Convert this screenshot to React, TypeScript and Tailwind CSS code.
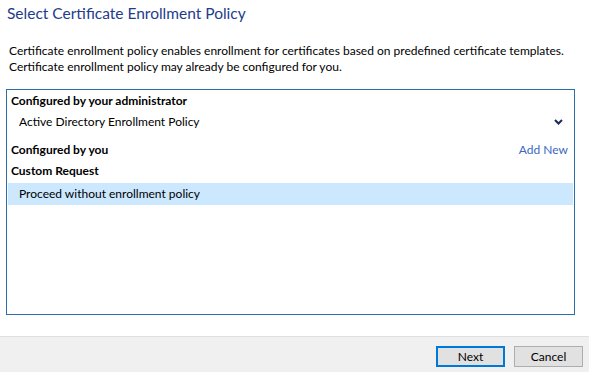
export default function App() {
  return (
    <div className="w-[589px] h-[372px] bg-white flex flex-col font-['Lato',sans-serif] text-[12px] text-black overflow-hidden">
      <div className="flex-1 flex flex-col pl-[7px] pr-[14px]">
        <h1 className="text-[15.5px] leading-[20px] text-[#1e3c8c] mt-[3px] whitespace-nowrap">
          Select Certificate Enrollment Policy
        </h1>
        <p className="mt-[20px] ml-[2px] leading-[16px] whitespace-nowrap">
          Certificate enrollment policy enables enrollment for certificates based on predefined certificate templates.
          <br />
          Certificate enrollment policy may already be configured for you.
        </p>
        <div className="mt-[14px] -ml-[1px] h-[226px] border border-[#2b6ea8] flex flex-col px-[1px]">
          <div className="font-bold pl-[3px] pt-[2px] leading-[17px]">Configured by your administrator</div>
          <div className="flex items-center justify-between h-[23px] pl-[11px] pr-[10px] mt-[1px]">
            <span>Active Directory Enrollment Policy</span>
            <svg width="9" height="6" viewBox="0 0 9 6" className="mt-[1px]">
              <path d="M1 1 L4.5 4.5 L8 1" stroke="#1b2a55" strokeWidth="2" fill="none" />
            </svg>
          </div>
          <div className="flex items-center justify-between h-[18px] pl-[3px] pr-[5px] mt-[8px]">
            <span className="font-bold">Configured by you</span>
            <span className="text-[#3a68c2]">Add New</span>
          </div>
          <div className="font-bold pl-[3px] h-[20px] leading-[20px] mt-[2px]">Custom Request</div>
          <div className="h-[22px] bg-[#cce8ff] pl-[11px] flex items-center mt-[2px]">
            Proceed without enrollment policy
          </div>
        </div>
      </div>
      <div className="h-[36px] bg-[#f0f0f0] border-t border-[#dfdfdf] flex items-start justify-end gap-[9px] pr-[6px] pt-[9px]">
        <button className="w-[69px] h-[21px] bg-[#e1e1e1] border-2 border-[#0078d7] text-[12px] leading-none">
          Next
        </button>
        <button className="w-[69px] h-[21px] bg-[#e1e1e1] border border-[#adadad] text-[12px] leading-none">
          Cancel
        </button>
      </div>
    </div>
  );
}
